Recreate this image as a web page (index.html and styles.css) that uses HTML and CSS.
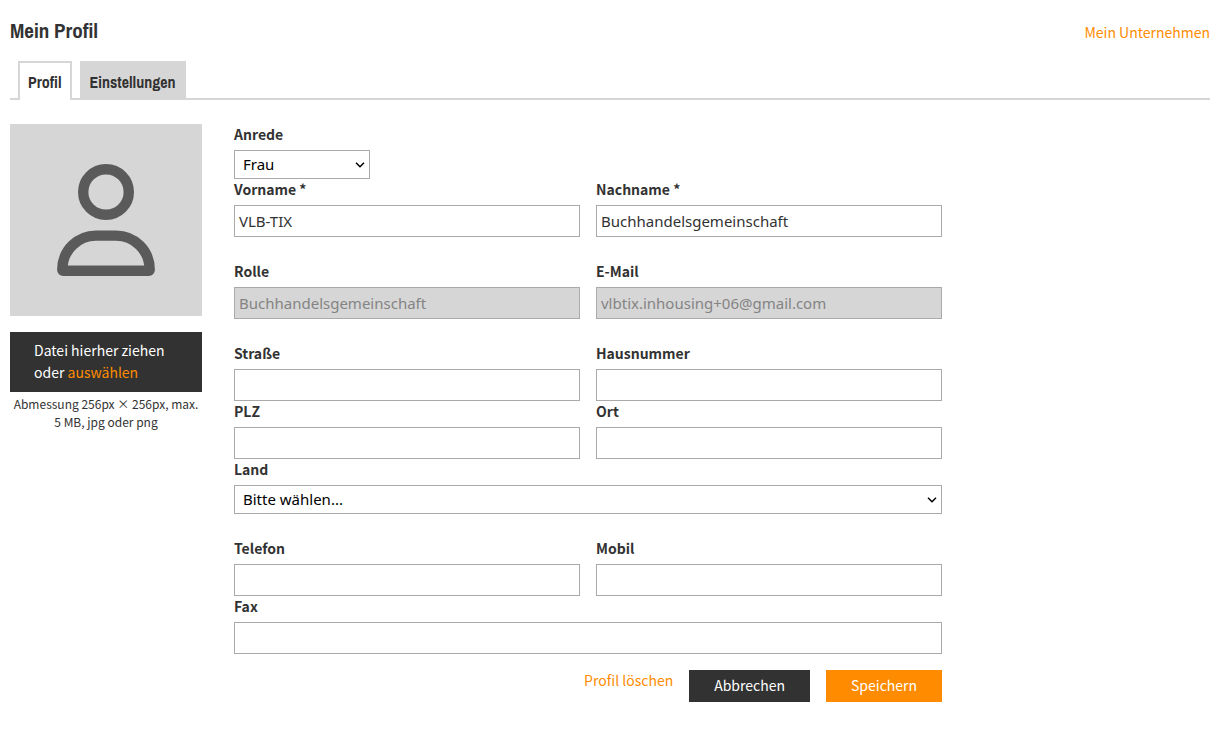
FILE: index.html
```html
<!DOCTYPE html>
<html lang="de">
<head>
<meta charset="utf-8">
<meta name="viewport" content="width=device-width, initial-scale=1">
<title>Mein Profil</title>
<link rel="stylesheet" href="styles.css">
</head>
<body>
<div class="page">
  <header class="page-header">
    <h1 class="title">Mein Profil</h1>
    <a class="link" href="#unternehmen">Mein Unternehmen</a>
  </header>
  <nav class="tabs">
    <a class="tab tab-active" href="#profil">Profil</a>
    <a class="tab" href="#einstellungen">Einstellungen</a>
  </nav>
  <main class="content">
    <aside class="picture">
      <svg class="avatar" viewBox="0 0 192 192" aria-hidden="true">
        <circle cx="96" cy="68" r="22.8"/>
        <path d="M52.3 145.7C52.3 126 68 111.6 86 111.6H106C124 111.6 139.7 126 139.7 145.7Q139.7 146.7 138.7 146.7H53.3Q52.3 146.7 52.3 145.7Z"/>
      </svg>
      <div class="dropzone"><span>Datei hierher ziehen</span> <span>oder</span> <a class="link" href="#datei">auswählen</a></div>
      <p class="hint">Abmessung 256px × 256px, max. 5&nbsp;MB, jpg oder png</p>
    </aside>
    <form class="form">
      <div class="group">
        <div class="field field-wide"><label for="anrede">Anrede</label>
          <select class="control select select-short" id="anrede"><option>Frau</option><option>Herr</option></select></div>
        <div class="field"><label for="vorname">Vorname *</label><input class="control" id="vorname" type="text" value="VLB-TIX"></div>
        <div class="field"><label for="nachname">Nachname *</label><input class="control" id="nachname" type="text" value="Buchhandelsgemeinschaft"></div>
      </div>
      <div class="group">
        <div class="field"><label for="rolle">Rolle</label><input class="control" id="rolle" type="text" value="Buchhandelsgemeinschaft" disabled></div>
        <div class="field"><label for="email">E-Mail</label><input class="control" id="email" type="email" value="vlbtix.inhousing+06@gmail.com" disabled></div>
      </div>
      <div class="group">
        <div class="field"><label for="strasse">Straße</label><input class="control" id="strasse" type="text"></div>
        <div class="field"><label for="hausnummer">Hausnummer</label><input class="control" id="hausnummer" type="text"></div>
        <div class="field"><label for="plz">PLZ</label><input class="control" id="plz" type="text"></div>
        <div class="field"><label for="ort">Ort</label><input class="control" id="ort" type="text"></div>
        <div class="field field-wide"><label for="land">Land</label>
          <select class="control select" id="land"><option>Bitte wählen...</option></select></div>
      </div>
      <div class="group">
        <div class="field"><label for="telefon">Telefon</label><input class="control" id="telefon" type="tel"></div>
        <div class="field"><label for="mobil">Mobil</label><input class="control" id="mobil" type="tel"></div>
        <div class="field field-wide"><label for="fax">Fax</label><input class="control" id="fax" type="tel"></div>
      </div>
      <div class="actions">
        <a class="link" href="#loeschen">Profil löschen</a>
        <button class="button" type="button">Abbrechen</button>
        <button class="button button-primary" type="submit">Speichern</button>
      </div>
    </form>
  </main>
</div>
</body>
</html>
```
FILE: styles.css
```css
* {
  box-sizing: border-box;
}

body {
  margin: 0;
  background: #fff;
  color: #323232;
  font: 14px/22px "Noto Sans CJK JP", "Noto Sans", sans-serif;
}

.page {
  padding: 20px 22px 28px 10px;
}

.page-header {
  display: flex;
  justify-content: space-between;
  align-items: flex-start;
}

.page-header .link {
  line-height: 24px;
}

.title,
.tab {
  font-family: "Liberation Sans Narrow", "Archivo Narrow", "Liberation Sans", sans-serif;
  font-weight: 700;
}

.title {
  margin: 0;
  font-size: 21px;
  line-height: 22px;
}

.link {
  color: #ff8c00;
  text-decoration: none;
}

.tabs {
  display: flex;
  gap: 8px;
  margin-top: 17px;
  padding-left: 8px;
  border-bottom: 2px solid #d6d6d6;
}

.tab {
  padding: 8px 8px 5px;
  border: 2px solid #d6d6d6;
  border-bottom: 0;
  background: #d6d6d6;
  color: #323232;
  font-size: 16px;
  text-decoration: none;
}

.tab-active {
  margin-bottom: -2px;
  background: #fff;
}

.content {
  display: grid;
  grid-template-columns: 16% 59%;
  column-gap: 32px;
  align-items: start;
  margin-top: 24px;
}

.avatar {
  display: block;
  width: 100%;
  background: #d6d6d6;
  fill: none;
  stroke: #5a5a5a;
  stroke-width: 10.4;
}

.dropzone {
  margin-top: 16px;
  padding: 7px 24px 9px;
  background: #323232;
  color: #fff;
}

.hint {
  margin: 3px 0 0;
  font-size: 12px;
  line-height: 18px;
  text-align: center;
}

.group {
  display: grid;
  grid-template-columns: 1fr 1fr;
  column-gap: 16px;
  margin-bottom: 24px;
}

.group:nth-last-child(2) {
  margin-bottom: 16px;
}

.field {
  display: flex;
  flex-direction: column;
}

.field-wide {
  grid-column: 1 / -1;
}

label {
  padding-bottom: 6px;
  font-weight: 700;
  line-height: 20px;
}

.control {
  width: 100%;
  height: 32px;
  padding: 0 4px;
  border: 1px solid #aaa;
  border-radius: 0;
  background: #fff;
  color: #323232;
  font: 15px "Noto Sans", sans-serif;
}

.control:disabled {
  background: #d6d6d6;
  color: #848484;
}

.select {
  height: 29px;
  padding: 0 20px 1px 8px;
  appearance: none;
  background: #fff url("data:image/svg+xml,%3Csvg xmlns='http://www.w3.org/2000/svg' width='10' height='6'%3E%3Cpath d='M1 .8l4 4 4-4' fill='none' stroke='%23000' stroke-width='1.5'/%3E%3C/svg%3E") no-repeat right 4px center;
  color: #000;
}

.select-short {
  width: 136px;
}

.actions {
  display: flex;
  justify-content: flex-end;
  align-items: flex-start;
  gap: 16px;
}

.actions .link {
  line-height: 20px;
}

.button {
  height: 32px;
  padding: 0 25px 2px;
  border: 0;
  background: #323232;
  color: #fff;
  font: inherit;
}

.button-primary {
  background: #ff8c00;
}
```
